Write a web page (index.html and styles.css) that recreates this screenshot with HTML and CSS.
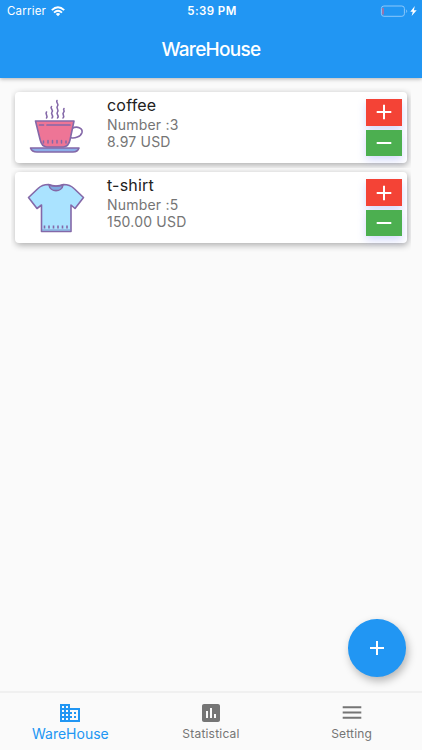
FILE: index.html
```html
<!DOCTYPE html>
<html lang="en">
<head>
<meta charset="utf-8">
<title>WareHouse</title>
<link rel="stylesheet" href="styles.css">
</head>
<body>
<div class="app">
  <header class="header">
    <div class="status">
      <div class="carrier"><span>Carrier</span>
        <svg class="wifi" width="14" height="11" viewBox="0 0 14 11"><g fill="none" stroke="#fff" stroke-width="1.9"><path d="M.8 4.1Q7-1.7 13.2 4.1"/><path d="M3 6.6Q7 2.9 11 6.6"/></g><path fill="#fff" d="M4.8 8Q7 6.2 9.2 8L7 10.3z"/></svg>
      </div>
      <div class="time">5:39 PM</div>
      <div class="power">
        <svg width="37" height="13" viewBox="0 0 37 13"><rect x="1.4" y="1" width="23" height="10.3" rx="2.5" fill="none" stroke="#8cc8fa"/><path d="M3 3v6.5" stroke="#b56c9b" stroke-width="1.6"/><path d="M26.200 4.700q1.300 1.500 0 3" fill="#8cc8fa" stroke="#8cc8fa" stroke-width=".6"/><path fill="#fff" d="M34.8 1 30.300 6.700h2.500l-1.200 4.400L36.700 5.300h-2.800z"/></svg>
      </div>
    </div>
    <h1 class="title">WareHouse</h1>
  </header>
  <main class="list">
    <div class="row"><article class="card">
      <svg class="picture" width="58" height="58" viewBox="0 0 58 58" fill="none" stroke="#8468a8" stroke-width="1.6" stroke-linecap="round" stroke-linejoin="round">
        <path d="M19.500 20c2-2-1.800-3.500 0-6M25 20c2.500-2-2-4 0-6s-2.500-3.500-.5-5.500M30.500 20c2.500-2-2-4 0-6s-2-4 0-6-2-3-.5-5.500M36 20c2.500-2-1.500-3.500.5-5.500s-1-2.500.500-4"/>
        <path d="M45 30.500c5-3 11-.5 10 4-1 4-7 6.500-13 5"/>
        <path fill="#ee7596" d="M8.500 23h38.500l-4 19c-.7 3.500-3 6.500-6.500 7h-17c-3.500-.5-5.500-3.500-6.300-7z"/>
        <path d="M12.500 27h4M20 27h23" stroke-width="1.700"/>
        <path d="M16.500 43v2M21 42.500v2.500M25.500 42.500v2.500M30 42.500v2.500M34.500 42.500v2.500M39 43v2" stroke-width="1.500"/>
        <path fill="#8caee8" d="M3.500 50H52c-1 3-3.500 4-6 4H10c-3 0-5.500-1-6.500-4z"/>
      </svg>
      <div class="info"><h2>coffee</h2><p class="number">Number :3</p><p class="price">8.97 USD</p></div>
      <div class="actions">
        <button class="add" aria-label="Add"><svg width="24" height="24" viewBox="0 0 24 24"><path d="M4.700 12h14.600M12 4.700v14.600"/></svg></button>
        <button class="remove" aria-label="Remove"><svg width="24" height="24" viewBox="0 0 24 24"><path d="M4.700 12h14.600"/></svg></button>
      </div>
    </article></div>
    <div class="row"><article class="card">
      <svg class="picture" width="58" height="58" viewBox="0 0 58 58" fill="none" stroke="#8468a8" stroke-width="1.600" stroke-linejoin="round">
        <path fill="#aae3ff" d="M21.500 6.500Q15 6.500 11 10.500L1.500 19.500 10 30.500l4.500-3.500V53.500h29.500V27l4 3.500 8.500-11L47 10.500Q43 6.500 36.500 6.500Q29 9.500 21.500 6.500z"/>
        <path fill="#7da9df" d="M22 7c1 7.500 13 7.500 14 0Q29 9.500 22 7z"/>
        <path d="M17.500 47.500v3M22 47.500v3M26.500 47.500v3M31 47.500v3M35.500 47.500v3M40 47.500v3"/>
        <path d="M15 52h28.500" stroke="#7895cc" stroke-width="1"/>
      </svg>
      <div class="info"><h2 class="shirt-name">t-shirt</h2><p class="number">Number :5</p><p class="price">150.00 USD</p></div>
      <div class="actions">
        <button class="add" aria-label="Add"><svg width="24" height="24" viewBox="0 0 24 24"><path d="M4.700 12h14.600M12 4.700v14.600"/></svg></button>
        <button class="remove" aria-label="Remove"><svg width="24" height="24" viewBox="0 0 24 24"><path d="M4.700 12h14.600"/></svg></button>
      </div>
    </article></div>
  </main>
  <button class="fab" aria-label="New item"><svg width="24" height="24" viewBox="0 0 24 24"><path d="M5 12h14M12 5v14"/></svg></button>
  <nav class="tabs">
    <a class="tab active"><svg width="24" height="24" viewBox="0 0 24 24"><path d="M12 7V3H2v18h20V7H12zM6 19H4v-2h2v2zm0-4H4v-2h2v2zm0-4H4V9h2v2zm0-4H4V5h2v2zm4 12H8v-2h2v2zm0-4H8v-2h2v2zm0-4H8V9h2v2zm0-4H8V5h2v2zm10 12h-8v-2h2v-2h-2v-2h2v-2h-2V9h8v10zm-2-8h-2v2h2v-2zm0 4h-2v2h2v-2z"/></svg><span>WareHouse</span></a>
    <a class="tab"><svg width="24" height="24" viewBox="0 0 24 24"><path d="M19 3H5c-1.100 0-2 .9-2 2v14c0 1.100.9 2 2 2h14c1.100 0 2-.9 2-2V5c0-1.100-.9-2-2-2zM9 17H7v-7h2v7zm4 0h-2V7h2v10zm4 0h-2v-4h2v4z"/></svg><span>Statistical</span></a>
    <a class="tab"><svg width="24" height="24" viewBox="0 0 24 24"><path d="M2.700 5.200h18.600v2H2.700zM2.700 10.500h18.600v2H2.700zM2.700 15.800h18.600v2H2.700z"/></svg><span>Setting</span></a>
  </nav>
</div>
</body>
</html>
```
FILE: styles.css
```css
* { box-sizing: border-box; }
body { margin: 0; background: #fafafa; font-family: Inter, "Liberation Sans", sans-serif; }
h1, h2, p { margin: 0; font-weight: 400; }
button { border: 0; padding: 0; }
svg { display: block; flex: none; }
.app { position: relative; height: 750px; display: flex; flex-direction: column; overflow: hidden; }
.header { height: 77.500px; flex: none; background: #2196f3; color: #fff; box-shadow: 0 1px 4px rgba(0,0,0,.3); }
.status { height: 22px; display: grid; grid-template-columns: 1fr auto 1fr; align-items: center; padding: 0 5px 0 7px; font-size: 11.500px; }
.carrier { display: flex; align-items: center; gap: 5px; letter-spacing: .2px; }
.time { font-weight: 600; letter-spacing: .4px; }
.power { display: flex; justify-content: flex-end; }
.title { font-size: 19px; line-height: 24px; padding-top: 16px; text-align: center; font-weight: 500; letter-spacing: -.7px; }
.list { flex: 1; padding: 10px 11px 0; }
.row { height: 80.400px; padding: 4.500px 4px; clip-path: inset(0); }
.row:last-child { height: 84px; }
.card { height: 71px; display: flex; background: #fff; border-radius: 4px; box-shadow: 1px 2px 7px rgba(0,0,0,.33); padding-left: 12px; }
.picture { margin-top: 6px; }
.info { flex: 1; padding: 4px 0 0 22px; color: #757575; }
.info h2 { color: #212121; font-size: 16px; line-height: 19.500px; letter-spacing: .2px; }
.info p { font-size: 14px; line-height: 17.300px; letter-spacing: .2px; }
.actions { width: 36px; margin: 7px 5px 0 0; display: flex; flex-direction: column; gap: 4px; }
.actions button { width: 36px; height: 26.500px; display: flex; align-items: center; justify-content: center; box-shadow: 0 4px 9px rgba(100,120,245,.28); }
.actions .add { background: #f44336; }
.actions .remove { background: #4caf50; }
button svg { fill: none; stroke: #fff; stroke-width: 2; }
.fab { position: absolute; left: 348px; top: 619px; width: 57.500px; height: 57.500px; border-radius: 50%; background: #2196f3; display: flex; align-items: center; justify-content: center; box-shadow: 2px 4px 9px rgba(0,0,0,.28); }
.tabs { height: 59px; flex: none; border-top: 2px solid #f0f0f0; display: grid; grid-template-columns: repeat(3, 1fr); background: #fafafa; }
.tab { display: flex; flex-direction: column; align-items: center; padding-top: 8px; color: #757575; font-size: 12px; line-height: 18px; letter-spacing: .2px; }
.tab svg { fill: currentColor; }
.tab.active { color: #2196f3; font-size: 14px; line-height: 17px; letter-spacing: 0; }
```
